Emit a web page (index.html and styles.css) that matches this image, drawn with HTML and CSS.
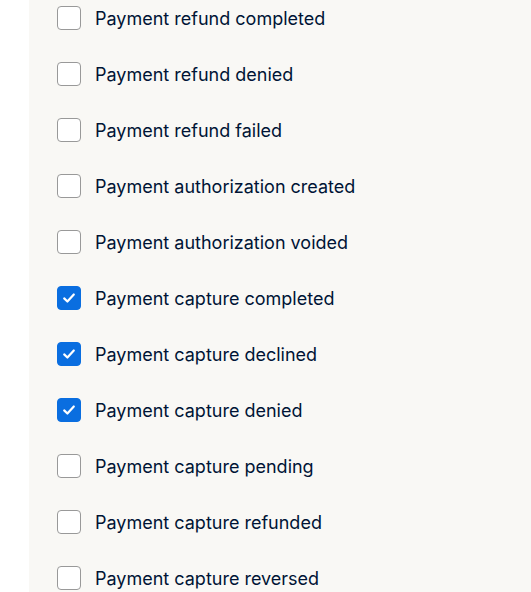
FILE: index.html
```html
<!DOCTYPE html>
<html>
<head>
<meta charset="utf-8">
<link rel="stylesheet" href="styles.css">
</head>
<body>
<div class="page">
  <div class="gutter"></div>
  <div class="panel">
    <ul class="list">
      <li class="row"><span class="box"></span><span class="label">Payment refund completed</span></li>
      <li class="row"><span class="box"></span><span class="label">Payment refund denied</span></li>
      <li class="row"><span class="box"></span><span class="label">Payment refund failed</span></li>
      <li class="row"><span class="box"></span><span class="label">Payment authorization created</span></li>
      <li class="row"><span class="box"></span><span class="label">Payment authorization voided</span></li>
      <li class="row"><span class="box checked"><svg viewBox="0 0 24 24" width="24" height="24"><path d="M7.2 12.4l3.2 3.1 6.4-7" fill="none" stroke="#fff" stroke-width="2.2" stroke-linecap="round" stroke-linejoin="round"/></svg></span><span class="label">Payment capture completed</span></li>
      <li class="row"><span class="box checked"><svg viewBox="0 0 24 24" width="24" height="24"><path d="M7.2 12.4l3.2 3.1 6.4-7" fill="none" stroke="#fff" stroke-width="2.2" stroke-linecap="round" stroke-linejoin="round"/></svg></span><span class="label">Payment capture declined</span></li>
      <li class="row"><span class="box checked"><svg viewBox="0 0 24 24" width="24" height="24"><path d="M7.2 12.4l3.2 3.1 6.4-7" fill="none" stroke="#fff" stroke-width="2.2" stroke-linecap="round" stroke-linejoin="round"/></svg></span><span class="label">Payment capture denied</span></li>
      <li class="row"><span class="box"></span><span class="label">Payment capture pending</span></li>
      <li class="row"><span class="box"></span><span class="label">Payment capture refunded</span></li>
      <li class="row"><span class="box"></span><span class="label">Payment capture reversed</span></li>
    </ul>
  </div>
</div>
</body>
</html>
```

FILE: styles.css
```css
html, body {
  margin: 0;
  padding: 0;
  background: #ffffff;
}
.page {
  display: flex;
  height: 592px;
  overflow: hidden;
}
.gutter {
  width: 29px;
  flex: none;
  background: #ffffff;
}
.panel {
  flex: 1;
  background: #f9f8f5;
}
.list {
  list-style: none;
  margin: 0;
  padding: 6px 0 0 28px;
  display: flex;
  flex-direction: column;
  gap: 32px;
}
.row {
  display: flex;
  align-items: center;
  height: 24px;
  gap: 14px;
}
.box {
  width: 24px;
  height: 24px;
  box-sizing: border-box;
  border: 1px solid #999999;
  border-radius: 4px;
  background: #ffffff;
  flex: none;
  display: flex;
}
.box.checked {
  background: #0a6ee0;
  border-color: #0a6ee0;
}
.box.checked svg {
  margin: -1px;
}
.label {
  font-family: Inter, "Liberation Sans", sans-serif;
  font-size: 18px;
  color: #001435;
  line-height: 24px;
  padding-top: 1px;
}
```
